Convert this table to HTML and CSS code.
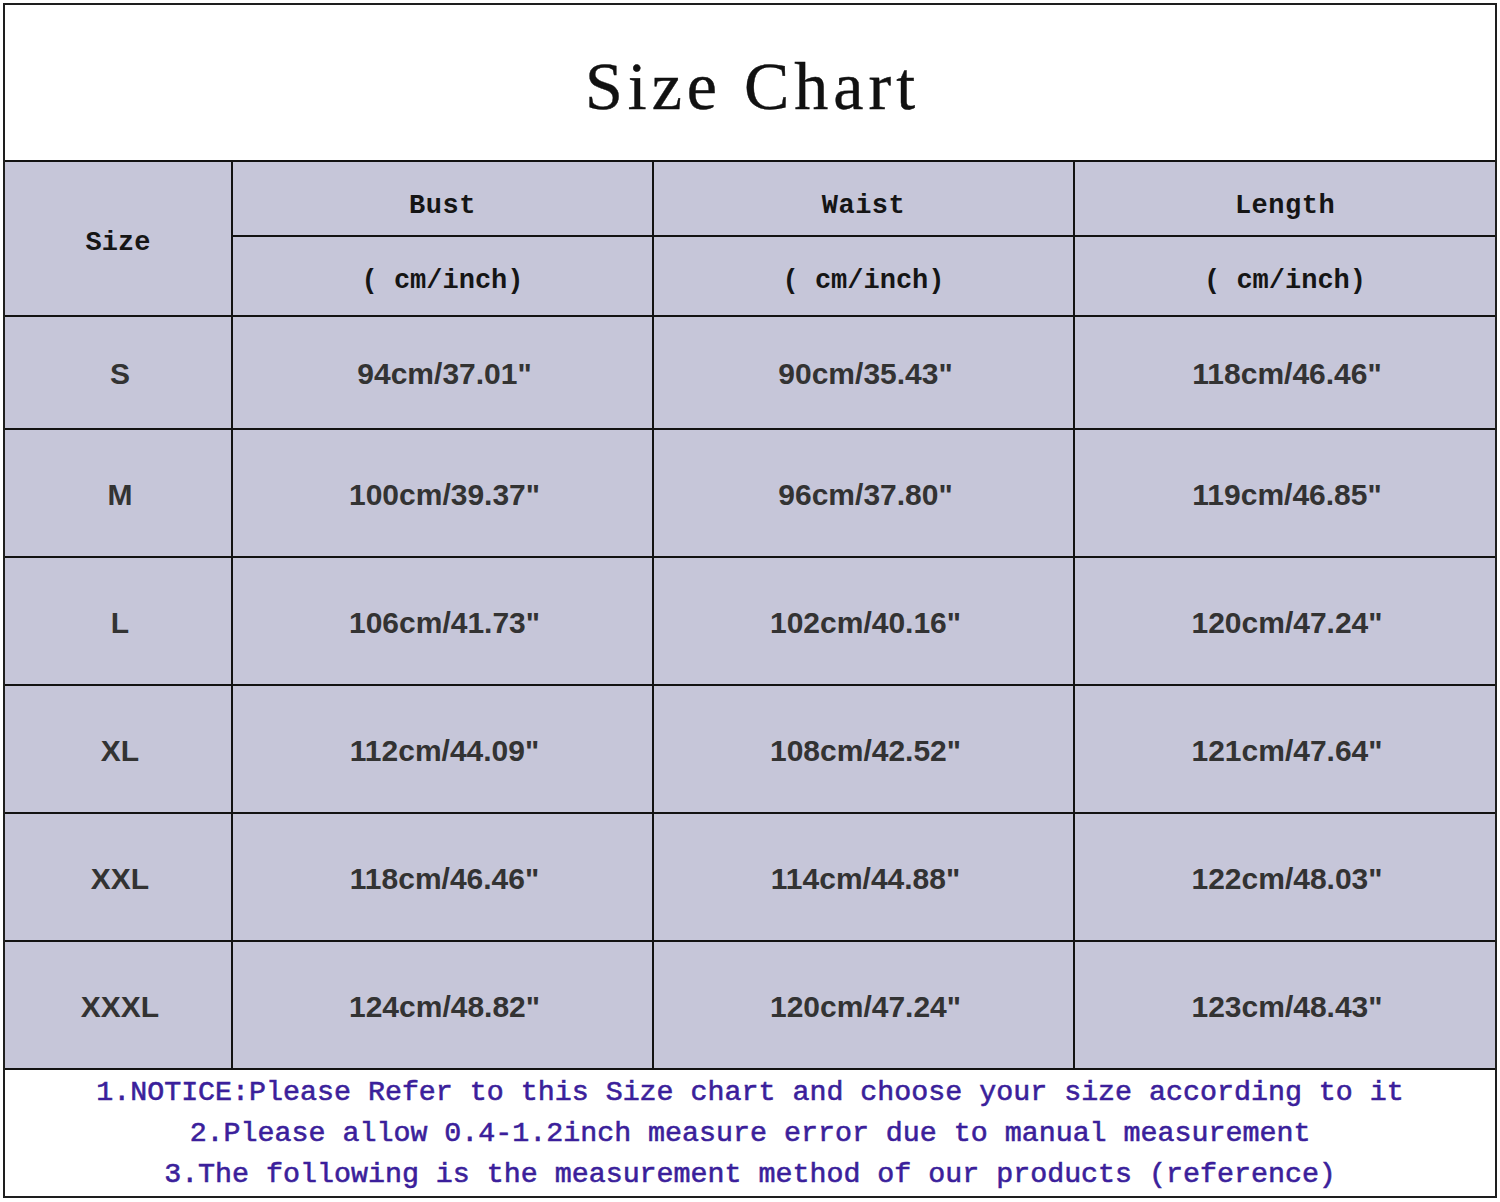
FILE: index.html
```html
<!DOCTYPE html>
<html>
<head>
<meta charset="utf-8">
<link rel="stylesheet" href="styles.css">
</head>
<body>
<div class="sheet">
  <div class="title">Size Chart</div>

  <div class="cell head size-head">Size</div>
  <div class="cell head h1">Bust</div>
  <div class="cell head h1">Waist</div>
  <div class="cell head h1">Length</div>
  <div class="cell head h2">( cm/inch)</div>
  <div class="cell head h2">( cm/inch)</div>
  <div class="cell head h2">( cm/inch)</div>

  <div class="cell data">S</div>
  <div class="cell data">94cm/37.01"</div>
  <div class="cell data">90cm/35.43"</div>
  <div class="cell data">118cm/46.46"</div>

  <div class="cell data">M</div>
  <div class="cell data">100cm/39.37"</div>
  <div class="cell data">96cm/37.80"</div>
  <div class="cell data">119cm/46.85"</div>

  <div class="cell data">L</div>
  <div class="cell data">106cm/41.73"</div>
  <div class="cell data">102cm/40.16"</div>
  <div class="cell data">120cm/47.24"</div>

  <div class="cell data">XL</div>
  <div class="cell data">112cm/44.09"</div>
  <div class="cell data">108cm/42.52"</div>
  <div class="cell data">121cm/47.64"</div>

  <div class="cell data">XXL</div>
  <div class="cell data">118cm/46.46"</div>
  <div class="cell data">114cm/44.88"</div>
  <div class="cell data">122cm/48.03"</div>

  <div class="cell data">XXXL</div>
  <div class="cell data">124cm/48.82"</div>
  <div class="cell data">120cm/47.24"</div>
  <div class="cell data">123cm/48.43"</div>

  <div class="notes">
    <p>1.NOTICE:Please Refer to this Size chart and choose your size according to it</p>
    <p>2.Please allow 0.4-1.2inch measure error due to manual measurement</p>
    <p>3.The following is the measurement method of our products (reference)</p>
  </div>
</div>
</body>
</html>
```

FILE: styles.css
```css
html, body {
  margin: 0;
  padding: 0;
  background: #ffffff;
}

body {
  padding: 3px;
}

.sheet {
  box-sizing: border-box;
  width: 1494px;
  border: 2px solid #1e1e1e;
  background: #121212;
  display: grid;
  grid-template-columns: 226px 419px 419px 420px;
  grid-template-rows: 155px 73px 78px 111px 126px 126px 126px 126px 126px 126px;
  gap: 2px;
}

.title {
  grid-column: 1 / -1;
  background: #ffffff;
  display: flex;
  align-items: center;
  justify-content: center;
  padding-top: 8px;
  padding-left: 5px;
  box-sizing: border-box;
  font-family: "Liberation Serif", serif;
  font-size: 68px;
  letter-spacing: 5px;
  color: #111111;
  -webkit-text-stroke: 0.4px #111111;
}

.cell {
  background: #c6c6d9;
  display: flex;
  align-items: center;
  justify-content: center;
  box-sizing: border-box;
}

.head {
  font-family: "Liberation Mono", monospace;
  font-weight: bold;
  font-size: 27px;
  color: #151515;
}

.size-head {
  grid-row: 2 / 4;
  padding-top: 8px;
}

.h1 {
  padding-top: 14px;
  letter-spacing: 0.5px;
}

.h2 {
  padding-top: 9px;
}

.data {
  font-family: "Liberation Sans", Arial, sans-serif;
  font-weight: bold;
  font-size: 30px;
  color: #333333;
  padding-top: 3px;
  padding-left: 4px;
}

.notes {
  grid-column: 1 / -1;
  background: #ffffff;
  display: flex;
  flex-direction: column;
  justify-content: center;
  align-items: center;
  font-family: "Liberation Mono", monospace;
  font-size: 28.3px;
  color: #3b1f9b;
  -webkit-text-stroke: 0.6px #3b1f9b;
}

.notes p {
  margin: 0;
  line-height: 41px;
  white-space: nowrap;
}
```
